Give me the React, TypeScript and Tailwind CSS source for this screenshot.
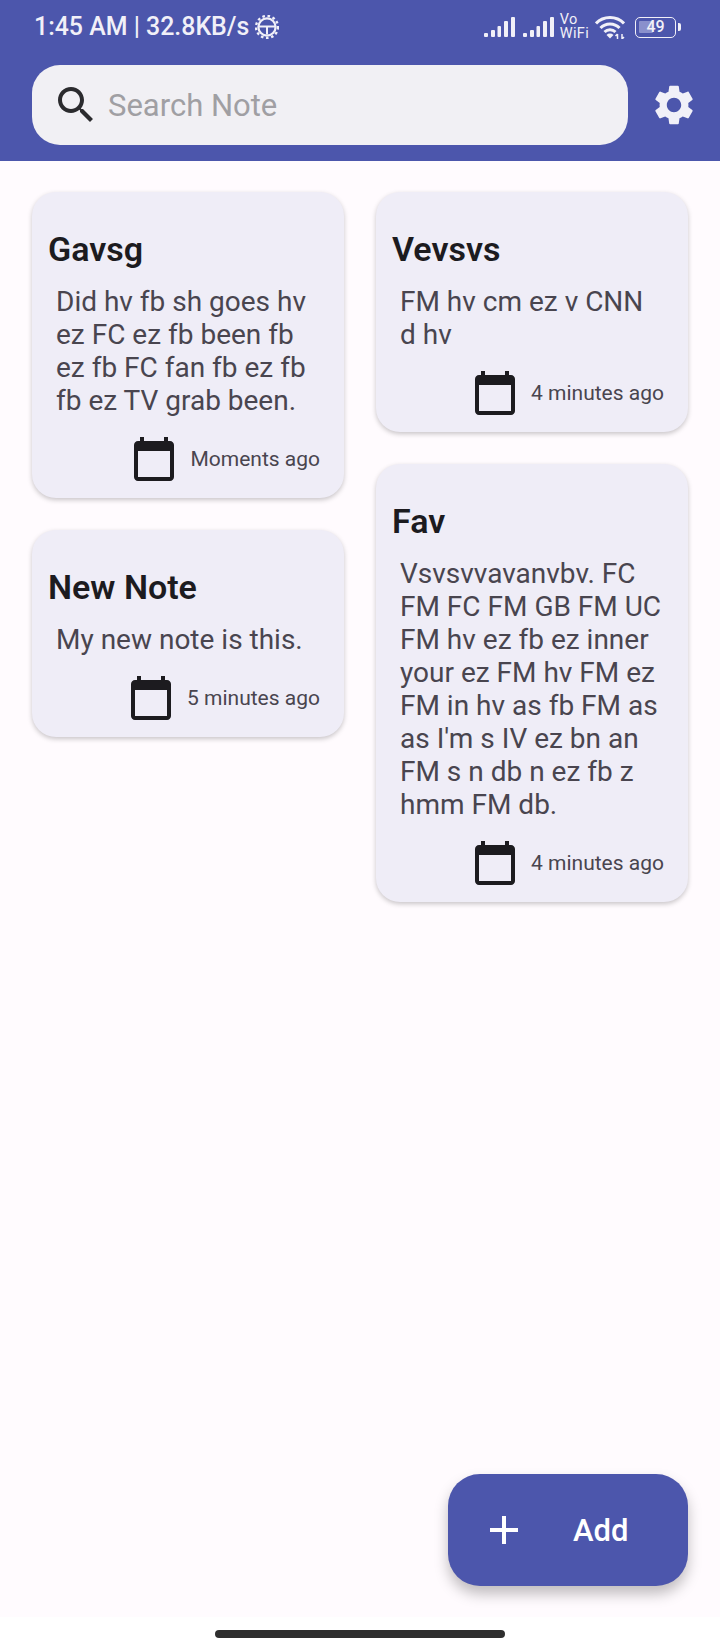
interface Note {
  title: string;
  body: string[];
  time: string;
}

const leftNotes: Note[] = [
  {
    title: "Gavsg",
    body: ["Did hv fb sh goes hv", "ez FC ez fb been fb", "ez fb FC fan fb ez fb", "fb ez TV grab been."],
    time: "Moments ago",
  },
  { title: "New Note", body: ["My new note is this."], time: "5 minutes ago" },
];

const rightNotes: Note[] = [
  { title: "Vevsvs", body: ["FM hv cm ez v CNN", "d hv"], time: "4 minutes ago" },
  {
    title: "Fav",
    body: [
      "Vsvsvvavanvbv. FC",
      "FM FC FM GB FM UC",
      "FM hv ez fb ez inner",
      "your ez FM hv FM ez",
      "FM in hv as fb FM as",
      "as I'm s IV ez bn an",
      "FM s n db n ez fb z",
      "hmm FM db.",
    ],
    time: "4 minutes ago",
  },
];

function SignalBars() {
  return (
    <svg width="31" height="20" viewBox="0 0 31 20" fill="#f1f0f8">
      <rect x="0" y="16" width="4" height="4" rx="1" />
      <rect x="7" y="13" width="4" height="7" rx="1" />
      <rect x="13.500" y="9" width="3.500" height="11" rx="1" />
      <rect x="20" y="4" width="4" height="16" rx="1" />
      <rect x="27" y="0" width="4" height="20" rx="1" />
    </svg>
  );
}

function StatusGear() {
  return (
    <svg width="24" height="24" viewBox="0 0 24 24" fill="none" stroke="#f1f0f8">
      <circle cx="12" cy="12" r="11" strokeWidth="2.4" strokeDasharray="2.6 2.6" />
      <circle cx="12" cy="12" r="8.6" strokeWidth="2.2" />
      <path d="M4 11.500h16M12 11.500v8" strokeWidth="2" />
    </svg>
  );
}

function WifiIcon() {
  return (
    <svg width="30" height="24" viewBox="0 0 30 24" fill="none" stroke="#f1f0f8" strokeWidth="3">
      <path d="M1 8.500C8.500 .5 21.500 .5 29 8.500" />
      <path d="M5.500 13C10.500 7.500 19.500 7.500 24.500 13" />
      <path d="M9.500 17C12.500 14 17.500 14 20.500 17" />
      <path d="M15 23.500l-3.500-3.500a5 5 0 0 1 7 0z" fill="#f1f0f8" stroke="none" />
      <path d="M22.500 24v-5M20.500 21l2-2M27 19v5M29 22l-2 2" strokeWidth="1.5" />
    </svg>
  );
}

function Battery() {
  return (
    <div className="flex items-center gap-[2px]">
      <div className="relative flex h-[21px] w-[41px] items-center justify-center rounded-[5px] border-[1.5px] border-[#f1f0f8]">
        <div className="absolute left-[3px] top-[3px] h-[12px] w-[14px] rounded-[1px] bg-[#8a90cc]" />
        <span className="relative text-[16px] font-medium leading-none text-[#f1f0f8]">49</span>
      </div>
      <div className="h-[8px] w-[3px] rounded-r-[2px] bg-[#f1f0f8]" />
    </div>
  );
}

function CalendarIcon() {
  return (
    <svg width="48" height="48" viewBox="0 0 24 24" fill="#1c1b1f">
      <path d="M20 3h-1V1h-2v2H7V1H5v2H4c-1.100 0-2 .9-2 2v16c0 1.100.9 2 2 2h16c1.100 0 2-.9 2-2V5c0-1.100-.9-2-2-2zm0 18H4V8h16v13z" />
    </svg>
  );
}

function NoteCard({ note }: { note: Note }) {
  return (
    <div className="rounded-[24px] bg-[#efedf7] pb-[15px] pl-[16px] pr-[24px] pt-[36px] shadow-[0_2px_5px_rgba(0,0,0,0.22)]">
      <h2 className="text-[34px] font-semibold leading-[42px] text-[#1c1b1f]">{note.title}</h2>
      <div className="mt-[15px] pl-[8px] text-[28px] leading-[33px] text-[#49454f]">
        {note.body.map((line) => (
          <div key={line} className="whitespace-nowrap">{line}</div>
        ))}
      </div>
      <div className="mt-[18px] flex items-center justify-end gap-[12px]">
        <CalendarIcon />
        <span className="whitespace-nowrap text-[21px] leading-[30px] text-[#49454f]">{note.time}</span>
      </div>
    </div>
  );
}

export default function App() {
  return (
    <div className="relative flex h-[1650px] w-[720px] flex-col overflow-hidden bg-[#fffbfe] font-['Roboto',sans-serif]">
      {/* Header with status bar and search */}
      <header className="h-[161px] shrink-0 bg-[#4c56ac]">
        <div className="flex h-[65px] items-center justify-between pb-[11px] pl-[34px] pr-[39px]">
          <div className="flex items-center gap-[6px] text-[24.900px] font-medium leading-none text-[#f1f0f8]">
            <span>1:45 AM | 32.8KB/s</span>
            <StatusGear />
          </div>
          <div className="flex items-center">
            <SignalBars />
            <div className="ml-[8px]">
              <SignalBars />
            </div>
            <div className="ml-[6px] text-[14.500px] leading-[14px] tracking-[0.3px] text-[#f1f0f8]">
              <div>Vo</div>
              <div>WiFi</div>
            </div>
            <div className="ml-[6px]">
              <WifiIcon />
            </div>
            <div className="ml-[10px]">
              <Battery />
            </div>
          </div>
        </div>
        <div className="flex items-center pl-[32px] pr-[24px]">
          <div className="flex h-[80px] w-[596px] shrink-0 items-center gap-[8px] rounded-[28px] bg-[#f1f0f4] pl-[20px]">
            <svg width="48" height="48" viewBox="0 0 24 24" fill="#2b2b2e">
              <path d="M15.500 14h-.79l-.28-.27C15.410 12.590 16 11.110 16 9.500 16 5.910 13.090 3 9.500 3S3 5.910 3 9.500 5.910 16 9.500 16c1.610 0 3.090-.59 4.230-1.570l.27.28v.79l5 4.990L20.490 19l-4.990-5zm-6 0C7.010 14 5 11.990 5 9.500S7.010 5 9.500 5 14 7.010 14 9.500 11.990 14 9.500 14z" />
            </svg>
            <span className="text-[31px] leading-none text-[#a09fa3]">Search Note</span>
          </div>
          <svg className="ml-[22px] shrink-0" width="48" height="48" viewBox="0 0 24 24" fill="#f1f0f8">
            <path d="M19.140 12.940c.04-.3.06-.61.06-.94 0-.32-.02-.64-.07-.94l2.030-1.580c.18-.14.23-.41.12-.61l-1.920-3.320c-.12-.22-.37-.29-.59-.22l-2.390.96c-.5-.38-1.030-.7-1.620-.94l-.36-2.540c-.04-.24-.24-.41-.48-.41h-3.840c-.24 0-.43.17-.47.41l-.36 2.540c-.59.24-1.130.57-1.620.94l-2.390-.96c-.22-.08-.47 0-.59.22L2.740 8.870c-.12.21-.08.47.12.61l2.030 1.580c-.05.3-.09.63-.09.94s.02.64.07.94l-2.030 1.580c-.18.14-.23.41-.12.61l1.920 3.320c.12.22.37.29.59.22l2.390-.96c.5.38 1.030.7 1.620.94l.36 2.540c.05.24.24.41.48.41h3.840c.24 0 .44-.17.47-.41l.36-2.540c.59-.24 1.130-.56 1.620-.94l2.390.96c.22.08.47 0 .59-.22l1.920-3.320c.12-.22.07-.47-.12-.61l-2.010-1.580zM12 15.600c-1.980 0-3.600-1.620-3.600-3.600s1.620-3.600 3.600-3.600 3.600 1.620 3.600 3.600-1.620 3.600-3.600 3.600z" />
          </svg>
        </div>
      </header>

      {/* Notes */}
      <main className="flex flex-1 items-start gap-[32px] px-[32px] pt-[31px]">
        <div className="flex w-[312px] flex-col gap-[32px]">
          {leftNotes.map((note) => (
            <NoteCard key={note.title} note={note} />
          ))}
        </div>
        <div className="flex w-[312px] flex-col gap-[32px]">
          {rightNotes.map((note) => (
            <NoteCard key={note.title} note={note} />
          ))}
        </div>
      </main>

      {/* Gesture bar */}
      <footer className="flex h-[33px] shrink-0 items-center justify-center bg-white">
        <div className="h-[8px] w-[290px] rounded-full bg-[#2e2e2e]" />
      </footer>

      <button className="absolute left-[448px] top-[1474px] flex h-[112px] w-[240px] items-center rounded-[32px] bg-[#4c56ac] pl-[32px] shadow-[0_8px_14px_rgba(0,0,0,0.25)]">
        <svg width="48" height="48" viewBox="0 0 24 24" fill="#ffffff">
          <path d="M19 13h-6v6h-2v-6H5v-2h6V5h2v6h6v2z" />
        </svg>
        <span className="ml-[45px] text-[31px] font-medium leading-none text-white">Add</span>
      </button>
    </div>
  );
}
